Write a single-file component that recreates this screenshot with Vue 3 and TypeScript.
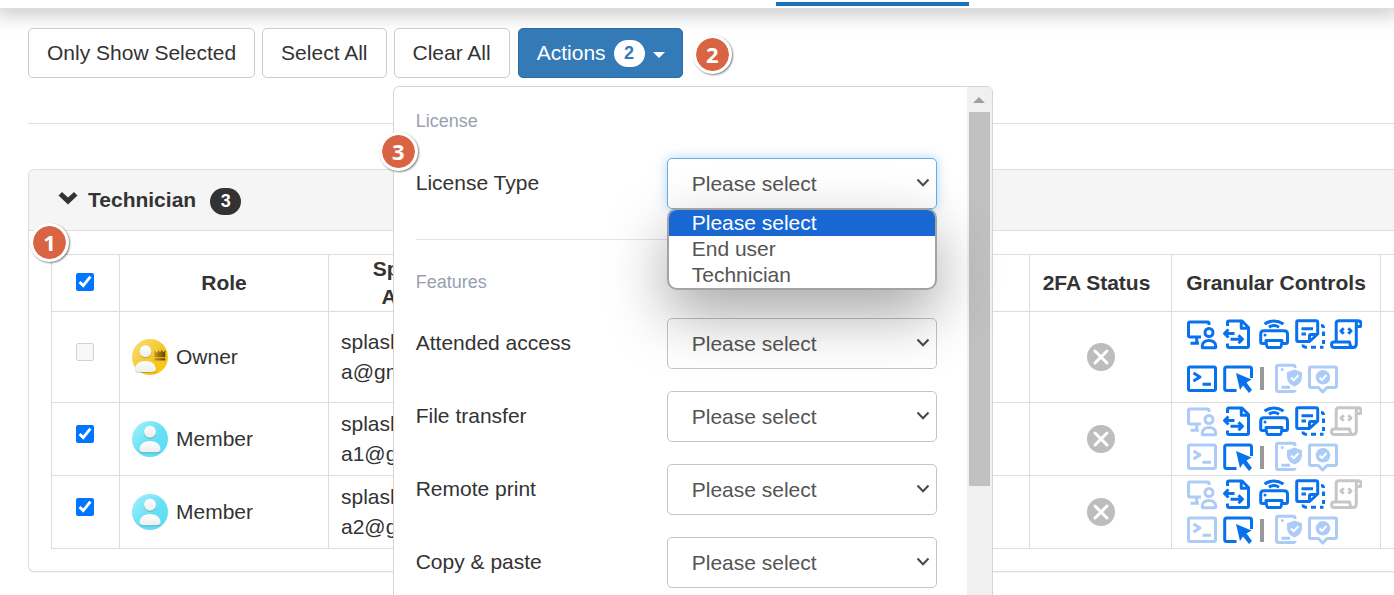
<script setup lang="ts">
import { ref } from 'vue'

type IconName =
  | 'remote' | 'file' | 'print' | 'copy' | 'script'
  | 'terminal' | 'cursor' | 'device' | 'review'
type Tone = 'on' | 'off' | 'none'

interface Control { icon: IconName; tone: Tone }
interface Member {
  id: string
  role: 'Owner' | 'Member'
  account: [string, string]
  checked: boolean
  primary: Control[]
  input: Control[]
  extra: Control[]
}

const extra: Control[] = [
  { icon: 'device', tone: 'off' },
  { icon: 'review', tone: 'off' },
]

function controls(full: boolean): Pick<Member, 'primary' | 'input' | 'extra'> {
  return {
    primary: [
      { icon: 'remote', tone: full ? 'on' : 'off' },
      { icon: 'file', tone: 'on' },
      { icon: 'print', tone: 'on' },
      { icon: 'copy', tone: 'on' },
      { icon: 'script', tone: full ? 'on' : 'none' },
    ],
    input: [
      { icon: 'terminal', tone: full ? 'on' : 'off' },
      { icon: 'cursor', tone: 'on' },
    ],
    extra,
  }
}

const members = ref<Member[]>([
  { id: 'owner', role: 'Owner', account: ['splashtop', 'a@gmail.com'], checked: false, ...controls(true) },
  { id: 'm1', role: 'Member', account: ['splashtop', 'a1@gmail.com'], checked: true, ...controls(false) },
  { id: 'm2', role: 'Member', account: ['splashtop', 'a2@gmail.com'], checked: true, ...controls(false) },
])

const allChecked = ref(true)
const license = ref('')
const licenseOptions = ['Please select', 'End user', 'Technician']
const features = ['Attended access', 'File transfer', 'Remote print', 'Copy & paste']
</script>

<template>
  <div class="page">
    <nav class="topnav"><span class="tab-line"></span></nav>

    <main class="content">
      <div class="toolbar">
        <button type="button" class="btn">Only Show Selected</button>
        <button type="button" class="btn">Select All</button>
        <button type="button" class="btn">Clear All</button>

        <div class="dropdown">
          <button type="button" class="btn primary" aria-expanded="true">
            Actions
            <span class="count light">2</span>
            <span class="caret"></span>
          </button>
          <span class="step step-two">2</span>

          <div class="menu">
            <span class="step step-three">3</span>
            <div class="menu-body">
              <h3 class="group">License</h3>
              <div class="fields">
                <label class="label" for="license">License Type</label>
                <div class="field">
                  <select id="license" v-model="license" class="select focused">
                    <option value="">Please select</option>
                    <option value="user">End user</option>
                    <option value="tech">Technician</option>
                  </select>
                  <svg class="arrow" viewBox="0 0 14 10"><path d="M1.500 1.500 7 7.300l5.500-5.800" /></svg>
                  <ul class="options" role="listbox" aria-label="License Type">
                    <li
                      v-for="(o, i) in licenseOptions"
                      :key="o"
                      role="option"
                      :aria-selected="i === 0"
                      :class="{ current: i === 0 }"
                    >{{ o }}</li>
                  </ul>
                </div>
              </div>
              <hr class="menu-rule">
              <h3 class="group features">Features</h3>
              <div class="fields">
                <template v-for="(f, i) in features" :key="f">
                  <label class="label" :for="'feature-' + i">{{ f }}</label>
                  <div class="field">
                    <select :id="'feature-' + i" class="select">
                      <option>Please select</option>
                    </select>
                    <svg class="arrow" viewBox="0 0 14 10"><path d="M1.500 1.500 7 7.300l5.500-5.800" /></svg>
                  </div>
                </template>
              </div>
            </div>
            <div class="scrollbar">
              <svg class="scroll-up" viewBox="0 0 12 6"><path d="M0 6 6 0l6 6z" /></svg>
              <div class="thumb"></div>
            </div>
          </div>
        </div>
      </div>

      <hr class="rule">

      <section class="panel">
        <span class="step step-one">1</span>
        <header class="panel-head">
          <svg class="chevron" viewBox="0 0 20 14"><path d="M4 1 10 6.600 16 1l3.500 3.400L10 13.500.500 4.400z" /></svg>
          <h2>Technician</h2>
          <span class="count dark">3</span>
        </header>
        <div class="panel-body">
          <table>
            <colgroup>
              <col class="c-pick"><col class="c-role"><col class="c-account"><col>
              <col class="c-2fa"><col class="c-controls"><col class="c-end">
            </colgroup>
            <thead>
              <tr>
                <th class="pick"><input v-model="allChecked" type="checkbox" aria-label="Select all rows"></th>
                <th>Role</th>
                <th>Splashtop<br>Account</th>
                <th></th>
                <th class="twofa">2FA Status</th>
                <th class="controls-head">Granular Controls</th>
                <th class="end"></th>
              </tr>
            </thead>
            <tbody>
              <tr v-for="m in members" :key="m.id" :class="{ owner: m.role === 'Owner' }">
                <td class="pick">
                  <input v-model="m.checked" type="checkbox" :disabled="m.role === 'Owner'" :aria-label="'Select ' + m.role">
                </td>
                <td>
                  <div class="role">
                    <svg class="avatar" viewBox="0 0 36 36">
                      <defs>
                        <linearGradient :id="'bg-' + m.id" x1="0" y1="0" x2="1" y2="1">
                          <stop offset="0" :stop-color="m.role === 'Owner' ? '#f7e07c' : '#a6f2fc'" />
                          <stop offset=".55" :stop-color="m.role === 'Owner' ? '#f3c62c' : '#67dff5'" />
                          <stop offset="1" :stop-color="m.role === 'Owner' ? '#fbc800' : '#59dcf5'" />
                        </linearGradient>
                        <linearGradient :id="'fg-' + m.id" x1="0" y1="0" x2="0" y2="1">
                          <stop offset="0" stop-color="#fff" />
                          <stop offset="1" stop-color="#ededed" />
                        </linearGradient>
                        <linearGradient :id="'crown-' + m.id" x1="0" y1="0" x2="1" y2="0">
                          <stop offset="0" stop-color="#c49a20" />
                          <stop offset="1" stop-color="#5d4300" />
                        </linearGradient>
                      </defs>
                      <circle cx="18" cy="18" r="18" :fill="`url(#bg-${m.id})`" />
                      <g v-if="m.role === 'Owner'">
                        <path :fill="`url(#crown-${m.id})`" d="m22.500 11.500 2.700 2.500 1.300-3 1.600 2.500 1.700-3 1.300 3 2.200-2.500v7.200H22.500zM22.500 19.300h10.800v2.200H22.500z" />
                        <path class="shade" d="M3 31c0-5 4.500-8.500 10.500-8.500S24.500 26 24.500 31c0 2-1.500 3-4 3H7c-2.500 0-4-1-4-3z" />
                        <path :fill="`url(#fg-${m.id})`" d="M3 30.300c0-4.900 4.500-8.300 10.500-8.300S24 25.400 24 30.300c0 1.800-1.500 2.700-4 2.700H7c-2.500 0-4-.9-4-2.700z" />
                        <circle class="shade" cx="13.500" cy="13" r="6.200" />
                        <circle cx="13.500" cy="12.200" r="6" :fill="`url(#fg-${m.id})`" />
                      </g>
                      <g v-else>
                        <path class="shade" d="M7.500 29.500c0-5 4.300-8.500 10.500-8.500s10.500 3.500 10.500 8.500c0 2-1.500 3-4 3h-13c-2.500 0-4-1-4-3z" />
                        <path :fill="`url(#fg-${m.id})`" d="M7.500 28.500c0-5 4.300-8.500 10.500-8.500s10.500 3.500 10.500 8.500c0 1.800-1.500 2.700-4 2.700h-13c-2.500 0-4-.9-4-2.700z" />
                        <circle class="shade" cx="18" cy="11.700" r="6.200" />
                        <circle cx="18" cy="10.800" r="6" :fill="`url(#fg-${m.id})`" />
                      </g>
                    </svg>
                    <span>{{ m.role }}</span>
                  </div>
                </td>
                <td class="account">{{ m.account[0] }}<br>{{ m.account[1] }}</td>
                <td></td>
                <td class="status">
                  <svg class="status-icon" viewBox="0 0 28 28" role="img" aria-label="Disabled">
                    <circle cx="14" cy="14" r="14" fill="#bdbdbd" />
                    <path d="m8 8 12 12M20 8 8 20" stroke="#fff" stroke-width="3" stroke-linecap="round" />
                  </svg>
                </td>
                <td class="controls-cell">
                  <div class="controls">
                    <div v-for="(line, n) in [m.primary, [...m.input, ...m.extra]]" :key="n" class="line">
                      <template v-for="c in line" :key="c.icon">
                        <span v-if="c.icon === 'device'" class="bar"></span>
                        <svg class="icon" :class="c.tone" viewBox="0 0 32 32">
                          <template v-if="c.icon === 'remote'">
                            <path d="M23 7V5.500Q23 4 21.500 4H4Q2.500 4 2.500 5.500V17.500Q2.500 19 4 19H15M10.700 19v6.300M4.500 25.300h8.500" />
                            <circle cx="23" cy="14.500" r="4" />
                            <path d="M16.200 28.400c0-3.800 3-6 6.800-6s6.800 2.200 6.800 6c0 .9-.500 1.400-1.400 1.400H17.600c-.9 0-1.400-.500-1.400-1.400z" />
                          </template>
                          <template v-else-if="c.icon === 'file'">
                            <path d="M5.500 8V4.500Q5.500 3 7 3H20L26.500 9.500V28Q26.500 29.500 25 29.500H7Q5.500 29.500 5.500 28V25.500M19.300 3v7.300h7M12.500 15.500H3M6.500 11.500 2.500 15.500l4 4M8.500 21.200H20M16.500 17.200l4 4-4 4" />
                          </template>
                          <template v-else-if="c.icon === 'print'">
                            <path d="M7.500 25.500H4.200Q2.700 25.500 2.700 24V16Q2.700 12.700 6 12.700H26.300Q29.500 12.700 29.500 16V24Q29.500 25.500 28 25.500H24.500M8.500 22.500H24Q23.500 29.500 22.500 29.500H9.500Q8.500 29.500 8 22.500zM6.500 6Q16 0 25.500 6M11 9.200Q16 6 21 9.200" />
                            <circle class="solid" cx="7" cy="17" r="1.500" />
                          </template>
                          <template v-else-if="c.icon === 'copy'">
                            <path d="M4.200 2.700H22Q23.700 2.700 23.700 4.400V16L15.500 23.500H4.200Q2.700 23.500 2.700 22V4.200Q2.700 2.700 4.200 2.700zM15.500 23V18Q15.500 16.500 17 16.500H23M7.500 10.700H19M7.500 16H12" />
                            <path d="M27 7.500Q29.500 7.500 29.500 10M29.500 13.500v4.500M29.500 22v4M29.500 29.300H26M22 29.300H17M13 29.300Q9 29.800 9 26.500" />
                          </template>
                          <template v-else-if="c.icon === 'script'">
                            <path d="M6.200 23V5.500Q6.200 2.700 9 2.700H28Q31 2.700 31 5.500V7.500Q31 8.500 30 8.500H26.500M28 2.700Q26.300 3.200 26.300 6V26Q26.300 29.500 23 29.500H4.500Q1.500 29.500 1.500 26.500Q1.500 24 4 24H19.500Q20.300 29.500 23 29.500M13.700 10.200 11 13l2.700 2.800M18.300 10.200 21 13l-2.700 2.800" />
                          </template>
                          <template v-else-if="c.icon === 'terminal'">
                            <rect x="2.500" y="4" width="27" height="23.500" rx="1.500" />
                            <path d="m7.500 10 6.500 4-6.500 4M16.500 21.300h8.500" />
                          </template>
                          <template v-else-if="c.icon === 'cursor'">
                            <path d="M14.500 27.500H4.500Q2.700 27.500 2.700 25.500V6Q2.700 4 4.700 4H27.500Q29.500 4 29.500 6V15" />
                            <path class="solid" d="m14 10 15.500 6.500-5 3 5.500 7.500-3 3-6-7.500-3 4.500z" />
                          </template>
                          <template v-else-if="c.icon === 'device'">
                            <path d="M25 5V4Q25 2.300 23 2.300H8.500Q6.500 2.300 6.500 4V26.500Q6.500 28.500 8.500 28.500H23Q25 28.500 25 27M11.500 24.300H20" />
                            <circle class="solid" cx="12.300" cy="6.500" r="1.500" />
                            <path class="solid" d="M24.500 6.500 32 9.300V14Q32 20.500 24.500 23.500Q17 20.500 17 14V9.300z" />
                            <path class="knock" d="m21 14.500 2.700 2.700 4.800-5" />
                          </template>
                          <template v-else>
                            <path d="M4.500 4H29Q30.500 4 30.500 5.500V23Q30.500 24.500 29 24.500H21L16.700 29 12.500 24.500H5Q3.500 24.500 3.500 23V5.500Q3.500 4 4.500 4z" />
                            <circle class="solid" cx="17" cy="14.300" r="7.300" />
                            <path class="knock" d="m13.500 14.500 2.500 2.500 4.500-5" />
                          </template>
                        </svg>
                      </template>
                    </div>
                  </div>
                </td>
                <td class="end"></td>
              </tr>
            </tbody>
          </table>
        </div>
      </section>
    </main>
  </div>
</template>

<style>
body {
  margin: 0;
  background: #fff;
}
</style>

<style scoped>
* {
  box-sizing: border-box;
}
.page {
  height: 100vh;
  overflow: hidden;
  font-family: "Liberation Sans", Arial, sans-serif;
  font-size: 21px;
  line-height: 30px;
  color: #333;
}
.topnav {
  display: grid;
  grid-template-columns: 776fr 193fr 425fr;
  height: 9px;
  padding-top: 2px;
  border-bottom: 1px solid #dedede;
  box-shadow: 0 0 20px 4px rgba(0, 0, 0, .27);
}
.tab-line {
  grid-column: 2;
  height: 4px;
  background: #1a73bb;
}
.content {
  padding: 19px 0 0 28px;
}
.toolbar {
  display: flex;
  gap: 7px;
}
.btn {
  display: flex;
  align-items: center;
  height: 50px;
  padding: 0 18px;
  border: 1px solid #ccc;
  border-radius: 5px;
  background: #fff;
  color: #333;
  font: inherit;
  white-space: nowrap;
}
.btn.primary {
  gap: 8px;
  padding-right: 17px;
  border-color: #2e6da4;
  background: #337ab7;
  color: #fff;
}
.count {
  width: 31px;
  height: 27px;
  border-radius: 14px;
  font-size: 18px;
  font-weight: bold;
  line-height: 27px;
  text-align: center;
}
.count.light {
  background: #fff;
  color: #337ab7;
}
.count.dark {
  margin: 2px 0 0 4px;
  background: #333;
  color: #fff;
}
.caret {
  margin-top: 4px;
  border-top: 6px solid #fff;
  border-left: 6px solid transparent;
  border-right: 6px solid transparent;
}
.dropdown {
  position: relative;
  z-index: 2;
  margin-left: 1px;
}
.step {
  position: absolute;
  z-index: 3;
  width: 39px;
  height: 39px;
  border: 3px solid #fff;
  border-radius: 50%;
  background: #d96444;
  background-clip: padding-box;
  box-shadow: 1px 1px 2px rgba(0, 0, 0, .5);
  color: #fff;
  font: bold 22px/32px "Open Sans", sans-serif;
  text-align: center;
}
.step-one {
  top: 53px;
  left: 1px;
}
.step-two {
  top: 7px;
  left: 175px;
}
.step-three {
  top: 45px;
  left: -15px;
}
.menu {
  position: absolute;
  top: 58px;
  left: -125px;
  display: flex;
  width: 600px;
  height: 100vh;
  border: 1px solid #d4d4d4;
  border-radius: 6px;
  background: #fff;
}
.menu-body {
  flex: 1;
  padding: 24px 30px 0 22px;
}
.group {
  margin: 0 0 27px;
  color: #999fb0;
  font-size: 18px;
  font-weight: normal;
  line-height: 20px;
}
.group.features {
  margin-bottom: 26px;
}
.fields {
  display: grid;
  grid-template-columns: 1fr 270px;
  row-gap: 22px;
}
.label {
  padding-top: 10px;
}
.field {
  position: relative;
}
.select {
  display: block;
  width: 100%;
  height: 51px;
  padding: 0 24px;
  border: 1px solid #c4c4c4;
  border-radius: 5px;
  outline: none;
  appearance: none;
  background: #fff;
  color: #555;
  font: inherit;
}
.select.focused {
  border-color: #66afe9;
  box-shadow: 0 0 12px rgba(102, 175, 233, .5);
}
.arrow {
  position: absolute;
  top: 20px;
  right: 7px;
  width: 14px;
  height: 10px;
  fill: none;
  stroke: #484848;
  stroke-width: 2;
  pointer-events: none;
}
.options {
  position: absolute;
  z-index: 4;
  top: 100%;
  left: 0;
  right: 0;
  margin: -1px 0 0;
  padding: 0;
  overflow: hidden;
  border: 2px solid #a3a3a3;
  border-radius: 10px;
  background: #fff;
  box-shadow: 0 24px 60px rgba(0, 0, 0, .35);
  color: #555;
  line-height: 26px;
  list-style: none;
}
.options li {
  padding-left: 23px;
}
.options .current {
  background: #1967d2;
  color: #fff;
}
.menu-rule {
  height: 1px;
  margin: 30px 0 32px;
  border: 0;
  background: #e5e5e5;
}
.scrollbar {
  display: flex;
  flex-direction: column;
  align-items: center;
  width: 25px;
  padding-top: 10px;
  border-radius: 0 5px 0 0;
  background: #f0f0f0;
}
.scroll-up {
  width: 12px;
  height: 6px;
  fill: #a0a0a0;
}
.thumb {
  width: 21px;
  height: 374px;
  margin-top: 9px;
  background: #c1c1c1;
}
.rule {
  height: 1px;
  margin: 45px 0;
  border: 0;
  background: #ddd;
}
.panel {
  position: relative;
  border: 1px solid #ddd;
  border-right: 0;
  border-radius: 6px 0 0 6px;
  background: #fff;
  box-shadow: 0 1px 1px rgba(0, 0, 0, .05);
}
.panel-head {
  display: flex;
  align-items: center;
  gap: 10px;
  height: 61px;
  padding-left: 29px;
  border-bottom: 1px solid #ddd;
  border-radius: 5px 0 0 0;
  background: #f5f5f5;
}
.panel-head h2 {
  margin: 0;
  font-size: 21px;
  line-height: 30px;
}
.chevron {
  width: 20px;
  height: 14px;
  margin-bottom: 4px;
  fill: #333;
}
.panel-body {
  padding: 23px 0 22px 22px;
}
table {
  width: 100%;
  border: 1px solid #ddd;
  border-right: 0;
  border-bottom: 0;
  border-spacing: 0;
  table-layout: fixed;
}
.c-pick { width: 68px; }
.c-role,
.c-controls { width: 209px; }
.c-account { width: 190px; }
.c-2fa { width: 142px; }
.c-end { width: 13px; }
th,
td {
  height: 73px;
  padding: 0 12px;
  border-right: 1px solid #ddd;
  border-bottom: 1px solid #ddd;
  vertical-align: middle;
}
th {
  height: 57px;
  padding: 0;
  line-height: 28px;
}
.owner td {
  height: 91px;
}
th.twofa {
  padding-right: 8px;
}
th.end,
td.end {
  padding: 0;
  border-right: 0;
}
th.pick {
  padding: 0 2px 2px 0;
}
td.pick {
  padding: 0 2px 10px 0;
}
.pick input {
  display: block;
  width: 18px;
  height: 18px;
  margin: 0 auto;
  accent-color: #0075ff;
}
.role {
  display: flex;
  align-items: center;
  gap: 8px;
}
.avatar {
  width: 36px;
  height: 36px;
}
.shade {
  fill: rgba(0, 0, 0, .18);
}
.status-icon {
  display: block;
  width: 28px;
  height: 28px;
  margin: 0 auto;
}
td.controls-cell {
  padding: 0 0 0 14px;
}
.owner .controls-cell {
  padding-bottom: 2px;
}
.controls {
  display: flex;
  flex-direction: column;
  gap: 4px;
}
.owner .controls {
  gap: 13px;
}
.line {
  display: flex;
  align-items: center;
  gap: 4px;
}
.bar {
  width: 4px;
  height: 23px;
  margin: 0 2px;
  background: #999;
}
.icon {
  flex: none;
  width: 32px;
  height: 32px;
  fill: none;
  stroke: currentColor;
  stroke-width: 3;
  stroke-linejoin: round;
}
.icon.on { color: #0872ee; }
.icon.off { color: #accbf7; }
.icon.none { color: #c6c6c6; }
.icon .solid {
  fill: currentColor;
  stroke: none;
}
.icon .knock {
  stroke: #fff;
  stroke-width: 2;
}
</style>
